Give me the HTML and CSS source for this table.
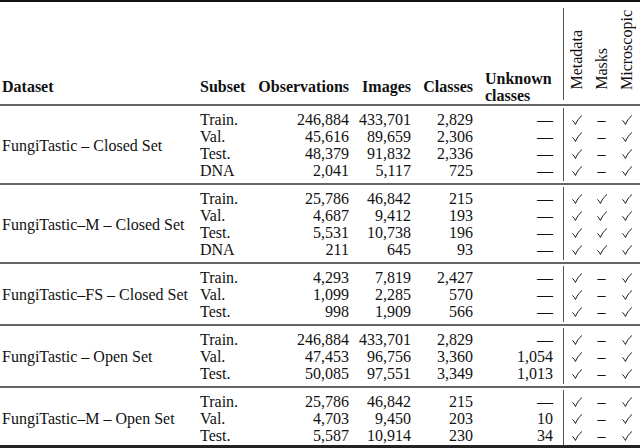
FILE: index.html
```html
<!DOCTYPE html>
<html lang="en">
<head>
<meta charset="utf-8">
<title>FungiTastic subsets</title>
<link rel="stylesheet" href="styles.css">
</head>
<body>
<svg class="defs" width="0" height="0" aria-hidden="true">
  <defs>
    <symbol id="ck" viewBox="0 0 11 11">
      <path d="M0.8 6.2 C1.9 7.2 2.9 8.6 3.8 10.4 C5.4 6.6 7.6 3.4 10.6 0.8" fill="none" stroke="#111" stroke-width="1.05" stroke-linecap="round" stroke-linejoin="round"/>
    </symbol>
  </defs>
</svg>
<table class="tbl">
  <colgroup>
    <col class="c-ds"><col class="c-sub"><col class="c-obs"><col class="c-img"><col class="c-cls"><col class="c-unk"><col class="c-meta"><col class="c-mask"><col class="c-mic">
  </colgroup>
  <thead>
    <tr>
      <th class="ds">Dataset</th>
      <th class="sub">Subset</th>
      <th class="num">Observations</th>
      <th class="num">Images</th>
      <th class="num">Classes</th>
      <th class="unk"><span class="mc">Unknown</span><span class="mc">classes</span></th>
      <th class="rot"><div class="rbox vl"><span class="vt">Metadata</span></div></th>
      <th class="rot"><div class="rbox"><span class="vt">Masks</span></div></th>
      <th class="rot"><div class="rbox"><span class="vt">Microscopic</span></div></th>
    </tr>
  </thead>
  <tbody>
    <tr><td class="ds" rowspan="4">FungiTastic – Closed Set</td><td class="sub">Train.</td><td class="num">246,884</td><td class="num">433,701</td><td class="num">2,829</td><td class="num unkd">—</td><td class="flag"><div class="fl vl"><svg class="ck"><use href="#ck"/></svg></div></td><td class="flag"><div class="fl dash">–</div></td><td class="flag"><div class="fl"><svg class="ck"><use href="#ck"/></svg></div></td></tr>
    <tr><td class="sub">Val.</td><td class="num">45,616</td><td class="num">89,659</td><td class="num">2,306</td><td class="num unkd">—</td><td class="flag"><div class="fl vl"><svg class="ck"><use href="#ck"/></svg></div></td><td class="flag"><div class="fl dash">–</div></td><td class="flag"><div class="fl"><svg class="ck"><use href="#ck"/></svg></div></td></tr>
    <tr><td class="sub">Test.</td><td class="num">48,379</td><td class="num">91,832</td><td class="num">2,336</td><td class="num unkd">—</td><td class="flag"><div class="fl vl"><svg class="ck"><use href="#ck"/></svg></div></td><td class="flag"><div class="fl dash">–</div></td><td class="flag"><div class="fl"><svg class="ck"><use href="#ck"/></svg></div></td></tr>
    <tr><td class="sub">DNA</td><td class="num">2,041</td><td class="num">5,117</td><td class="num">725</td><td class="num unkd">—</td><td class="flag"><div class="fl vl"><svg class="ck"><use href="#ck"/></svg></div></td><td class="flag"><div class="fl dash">–</div></td><td class="flag"><div class="fl"><svg class="ck"><use href="#ck"/></svg></div></td></tr>
  </tbody>
  <tbody>
    <tr><td class="ds" rowspan="4">FungiTastic–M – Closed Set</td><td class="sub">Train.</td><td class="num">25,786</td><td class="num">46,842</td><td class="num">215</td><td class="num unkd">—</td><td class="flag"><div class="fl vl"><svg class="ck"><use href="#ck"/></svg></div></td><td class="flag"><div class="fl"><svg class="ck"><use href="#ck"/></svg></div></td><td class="flag"><div class="fl"><svg class="ck"><use href="#ck"/></svg></div></td></tr>
    <tr><td class="sub">Val.</td><td class="num">4,687</td><td class="num">9,412</td><td class="num">193</td><td class="num unkd">—</td><td class="flag"><div class="fl vl"><svg class="ck"><use href="#ck"/></svg></div></td><td class="flag"><div class="fl"><svg class="ck"><use href="#ck"/></svg></div></td><td class="flag"><div class="fl"><svg class="ck"><use href="#ck"/></svg></div></td></tr>
    <tr><td class="sub">Test.</td><td class="num">5,531</td><td class="num">10,738</td><td class="num">196</td><td class="num unkd">—</td><td class="flag"><div class="fl vl"><svg class="ck"><use href="#ck"/></svg></div></td><td class="flag"><div class="fl"><svg class="ck"><use href="#ck"/></svg></div></td><td class="flag"><div class="fl"><svg class="ck"><use href="#ck"/></svg></div></td></tr>
    <tr><td class="sub">DNA</td><td class="num">211</td><td class="num">645</td><td class="num">93</td><td class="num unkd">—</td><td class="flag"><div class="fl vl"><svg class="ck"><use href="#ck"/></svg></div></td><td class="flag"><div class="fl"><svg class="ck"><use href="#ck"/></svg></div></td><td class="flag"><div class="fl"><svg class="ck"><use href="#ck"/></svg></div></td></tr>
  </tbody>
  <tbody>
    <tr><td class="ds" rowspan="3">FungiTastic–FS – Closed Set</td><td class="sub">Train.</td><td class="num">4,293</td><td class="num">7,819</td><td class="num">2,427</td><td class="num unkd">—</td><td class="flag"><div class="fl vl"><svg class="ck"><use href="#ck"/></svg></div></td><td class="flag"><div class="fl dash">–</div></td><td class="flag"><div class="fl"><svg class="ck"><use href="#ck"/></svg></div></td></tr>
    <tr><td class="sub">Val.</td><td class="num">1,099</td><td class="num">2,285</td><td class="num">570</td><td class="num unkd">—</td><td class="flag"><div class="fl vl"><svg class="ck"><use href="#ck"/></svg></div></td><td class="flag"><div class="fl dash">–</div></td><td class="flag"><div class="fl"><svg class="ck"><use href="#ck"/></svg></div></td></tr>
    <tr><td class="sub">Test.</td><td class="num">998</td><td class="num">1,909</td><td class="num">566</td><td class="num unkd">—</td><td class="flag"><div class="fl vl"><svg class="ck"><use href="#ck"/></svg></div></td><td class="flag"><div class="fl dash">–</div></td><td class="flag"><div class="fl"><svg class="ck"><use href="#ck"/></svg></div></td></tr>
  </tbody>
  <tbody>
    <tr><td class="ds" rowspan="3">FungiTastic – Open Set</td><td class="sub">Train.</td><td class="num">246,884</td><td class="num">433,701</td><td class="num">2,829</td><td class="num unkd">—</td><td class="flag"><div class="fl vl"><svg class="ck"><use href="#ck"/></svg></div></td><td class="flag"><div class="fl dash">–</div></td><td class="flag"><div class="fl"><svg class="ck"><use href="#ck"/></svg></div></td></tr>
    <tr><td class="sub">Val.</td><td class="num">47,453</td><td class="num">96,756</td><td class="num">3,360</td><td class="num unkd">1,054</td><td class="flag"><div class="fl vl"><svg class="ck"><use href="#ck"/></svg></div></td><td class="flag"><div class="fl dash">–</div></td><td class="flag"><div class="fl"><svg class="ck"><use href="#ck"/></svg></div></td></tr>
    <tr><td class="sub">Test.</td><td class="num">50,085</td><td class="num">97,551</td><td class="num">3,349</td><td class="num unkd">1,013</td><td class="flag"><div class="fl vl"><svg class="ck"><use href="#ck"/></svg></div></td><td class="flag"><div class="fl dash">–</div></td><td class="flag"><div class="fl"><svg class="ck"><use href="#ck"/></svg></div></td></tr>
  </tbody>
  <tbody class="last">
    <tr><td class="ds" rowspan="3">FungiTastic–M – Open Set</td><td class="sub">Train.</td><td class="num">25,786</td><td class="num">46,842</td><td class="num">215</td><td class="num unkd">—</td><td class="flag"><div class="fl vl"><svg class="ck"><use href="#ck"/></svg></div></td><td class="flag"><div class="fl dash">–</div></td><td class="flag"><div class="fl"><svg class="ck"><use href="#ck"/></svg></div></td></tr>
    <tr><td class="sub">Val.</td><td class="num">4,703</td><td class="num">9,450</td><td class="num">203</td><td class="num unkd">10</td><td class="flag"><div class="fl vl"><svg class="ck"><use href="#ck"/></svg></div></td><td class="flag"><div class="fl dash">–</div></td><td class="flag"><div class="fl"><svg class="ck"><use href="#ck"/></svg></div></td></tr>
    <tr><td class="sub">Test.</td><td class="num">5,587</td><td class="num">10,914</td><td class="num">230</td><td class="num unkd">34</td><td class="flag"><div class="fl vl"><svg class="ck"><use href="#ck"/></svg></div></td><td class="flag"><div class="fl dash">–</div></td><td class="flag"><div class="fl"><svg class="ck"><use href="#ck"/></svg></div></td></tr>
  </tbody>
</table>
</body>
</html>
```

FILE: styles.css
```css
html, body {
  margin: 0;
  padding: 0;
  background: #ffffff;
}

body {
  font-family: "Liberation Serif", "Times New Roman", serif;
  font-size: 16px;
  color: #111111;
}

.defs {
  position: absolute;
  width: 0;
  height: 0;
  overflow: hidden;
}

.tbl {
  width: 640px;
  table-layout: fixed;
  border-collapse: separate;
  border-spacing: 0;
}

.c-ds { width: 196px; }
.c-sub { width: 56px; }
.c-obs { width: 103px; }
.c-img { width: 62px; }
.c-cls { width: 62px; }
.c-unk { width: 84px; }
.c-meta { width: 27px; }
.c-mask { width: 23px; }
.c-mic { width: 27px; }

.tbl th,
.tbl td {
  padding: 0;
  line-height: 17px;
  white-space: nowrap;
}

/* header */
.tbl th {
  font-weight: bold;
  border-top: 2px solid #111111;
  vertical-align: bottom;
  padding-bottom: 9px;
}

.tbl th.ds,
.tbl td.ds {
  text-align: left;
  padding-left: 2px;
}

.tbl th.sub,
.tbl td.sub {
  text-align: left;
  padding-left: 4px;
}

.tbl th.num,
.tbl td.num {
  text-align: right;
  padding-right: 6px;
}

.tbl td.unkd {
  padding-right: 10px;
}

.tbl th.unk {
  text-align: left;
  padding-left: 6px;
  padding-right: 10px;
  padding-bottom: 0;
}

.mc {
  display: block;
  height: 17px;
  line-height: 17px;
}

.tbl th.rot {
  padding-top: 6px;
  padding-bottom: 4px;
}

.rbox {
  box-sizing: border-box;
  height: 92px;
  display: flex;
  flex-direction: column;
  justify-content: flex-end;
  align-items: center;
  padding-bottom: 10px;
}

.vt {
  writing-mode: vertical-rl;
  transform: rotate(180deg);
  font-weight: normal;
  line-height: 16px;
}

.vl {
  border-left: 1px solid #555555;
}

/* body rows */
.tbl td {
  vertical-align: middle;
}

.tbl tbody tr:first-child td {
  border-top: 2px solid #666666;
  padding-top: 5px;
}

.tbl tbody tr:last-child td,
.tbl td.ds {
  padding-bottom: 4px;
}

.tbl td.flag,
.tbl tbody tr:first-child td.flag,
.tbl tbody tr:last-child td.flag {
  padding: 0;
}

.tbl tbody tr:first-child td.flag {
  padding-top: 2px;
}

.tbl tbody tr:last-child td.flag {
  padding-bottom: 2px;
}

.fl {
  box-sizing: border-box;
  display: flex;
  align-items: center;
  justify-content: center;
  height: 17px;
  line-height: 17px;
}

.ck {
  display: block;
  width: 10px;
  height: 10px;
  margin-top: 1px;
}

.tbl tbody tr:first-child .fl {
  padding-top: 3px;
  height: 20px;
}

.tbl tbody tr:last-child .fl {
  padding-bottom: 2px;
  height: 19px;
}

.fl.dash {
  font-family: "Liberation Serif", serif;
  font-size: 16px;
}

.tbl tbody.last tr:last-child td,
.tbl tbody.last td.ds {
  padding-bottom: 1px;
  border-bottom: 3px solid #222222;
}

.tbl tbody.last tr:last-child td.flag {
  padding-bottom: 0;
}

.tbl tbody.last tr:last-child .fl {
  padding-bottom: 1px;
  height: 18px;
}
```
